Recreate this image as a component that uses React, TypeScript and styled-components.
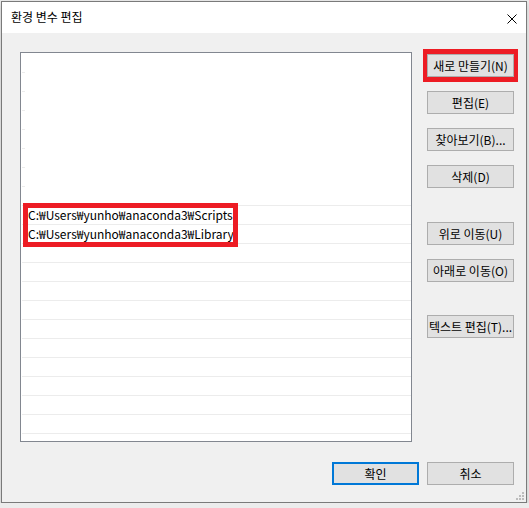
import React from "react";
import styled, { createGlobalStyle } from "styled-components";

const Global = createGlobalStyle`
  html, body { margin: 0; padding: 0; background: #ececec; }
  body { padding: 1px 0 0 1px; font-family: "Noto Sans CJK KR", "Noto Sans", sans-serif; }
  * { box-sizing: border-box; }
`;

const Window = styled.div`
  width: 526px;
  height: 502px;
  border: 1px solid #7a7a7a;
  background: #f0f0f0;
  display: flex;
  flex-direction: column;
  box-shadow: 0 3px 6px rgba(0, 0, 0, 0.18);
  position: relative;
`;

const TitleBar = styled.div`
  height: 31px;
  background: #ffffff;
  display: flex;
  align-items: center;
  justify-content: space-between;
  padding: 0 9px 0 9px;
  flex: none;
`;

const Title = styled.span`
  font-size: 12px;
  color: #000;
  line-height: 1;
  margin-top: -1px;
`;

const CloseBtn = styled.span`
  width: 10px;
  height: 10px;
  display: flex;
  margin-right: 0px;
  margin-top: 2px;
`;

const Content = styled.div`
  flex: 1;
  padding: 19px 12px 0 18px;
  display: flex;
  flex-direction: column;
  position: relative;
`;

const Main = styled.div`
  display: flex;
  gap: 15px;
`;

const List = styled.div`
  position: relative;
  width: 392px;
  height: 390px;
  background: #ffffff;
  border: 1px solid #828790;
  overflow: hidden;
  padding-top: 1px;
`;

const Row = styled.div<{ $full?: boolean }>`
  position: relative;
  height: 19px;
  margin-left: 1px;
  padding-left: 6px;
  display: flex;
  align-items: center;
  font-size: 12px;
  color: #000;
  white-space: nowrap;
  &::after {
    content: "";
    position: absolute;
    left: 0;
    bottom: 0;
    height: 1px;
    width: ${(p) => (p.$full ? "100%" : "3px")};
    background: #ececec;
  }
`;

const PathText = styled.span`
  font-family: "Noto Sans CJK KR", "Noto Sans", sans-serif;
  font-size: 12px;
  letter-spacing: 0px;
  line-height: 1;
  margin-top: -1px;
`;

const RedFrame = styled.div`
  position: absolute;
  left: 2px;
  top: 150px;
  width: 215px;
  height: 44px;
  border: 5px solid #ed1c24;
  pointer-events: none;
`;

const ButtonCol = styled.div`
  width: 87px;
  display: flex;
  flex-direction: column;
`;

const Slot = styled.div<{ $top: number }>`
  position: relative;
  margin-top: ${(p) => p.$top}px;
`;

const Button = styled.button<{ $primary?: boolean }>`
  width: 87px;
  height: 23px;
  margin: 0;
  padding: 0;
  background: #e1e1e1;
  border: ${(p) => (p.$primary ? "2px solid #0078d7" : "1px solid #adadad")};
  font-family: "Noto Sans CJK KR", "Noto Sans", sans-serif;
  font-size: 12px;
  color: #000;
  display: flex;
  align-items: center;
  justify-content: center;
  line-height: 1;
  white-space: nowrap;
`;

const ButtonFrame = styled.div`
  position: absolute;
  top: -5px;
  left: -4px;
  right: -4px;
  bottom: -5px;
  border-style: solid;
  border-color: #ed1c24;
  border-width: 5px 4px 5px 4px;
  pointer-events: none;
`;

const Footer = styled.div`
  display: flex;
  justify-content: flex-end;
  gap: 8px;
  margin-top: 20px;
`;

const Grip = styled.svg`
  position: absolute;
  right: 1px;
  bottom: 1px;
`;

const rows = Array.from({ length: 21 }, (_, i) => i);
const texts: Record<number, string> = {
  8: "C:₩Users₩yunho₩anaconda3₩Scripts",
  9: "C:₩Users₩yunho₩anaconda3₩Library",
};

const sideButtons: { label: string; top: number; highlight?: boolean }[] = [
  { label: "새로 만들기(N)", top: 2, highlight: true },
  { label: "편집(E)", top: 14 },
  { label: "찾아보기(B)...", top: 14 },
  { label: "삭제(D)", top: 14 },
  { label: "위로 이동(U)", top: 34 },
  { label: "아래로 이동(O)", top: 14 },
  { label: "텍스트 편집(T)...", top: 33 },
];

export default function App() {
  return (
    <>
      <Global />
      <Window>
        <TitleBar>
          <Title>환경 변수 편집</Title>
          <CloseBtn>
            <svg width="10" height="10" viewBox="0 0 10 10">
              <path d="M0.5 0.5 L9.5 9.5 M9.5 0.5 L0.5 9.5" stroke="#000" strokeWidth="1" />
            </svg>
          </CloseBtn>
        </TitleBar>
        <Content>
          <Main>
            <List>
              {rows.map((i) => (
                <Row key={i} $full={i >= 7 && i < 20}>
                  {texts[i] ? <PathText>{texts[i]}</PathText> : null}
                </Row>
              ))}
              <RedFrame />
            </List>
            <ButtonCol>
              {sideButtons.map((b) => (
                <Slot key={b.label} $top={b.top}>
                  <Button>{b.label}</Button>
                  {b.highlight ? <ButtonFrame /> : null}
                </Slot>
              ))}
            </ButtonCol>
          </Main>
          <Footer>
            <Button $primary>확인</Button>
            <Button>취소</Button>
          </Footer>
          <Grip width="9" height="9" viewBox="0 0 9 9">
            <rect x="6" y="0" width="2" height="2" fill="#bcbcbc" />
            <rect x="3" y="3" width="2" height="2" fill="#bcbcbc" />
            <rect x="6" y="3" width="2" height="2" fill="#bcbcbc" />
            <rect x="0" y="6" width="2" height="2" fill="#bcbcbc" />
            <rect x="3" y="6" width="2" height="2" fill="#bcbcbc" />
            <rect x="6" y="6" width="2" height="2" fill="#bcbcbc" />
          </Grip>
        </Content>
      </Window>
    </>
  );
}
